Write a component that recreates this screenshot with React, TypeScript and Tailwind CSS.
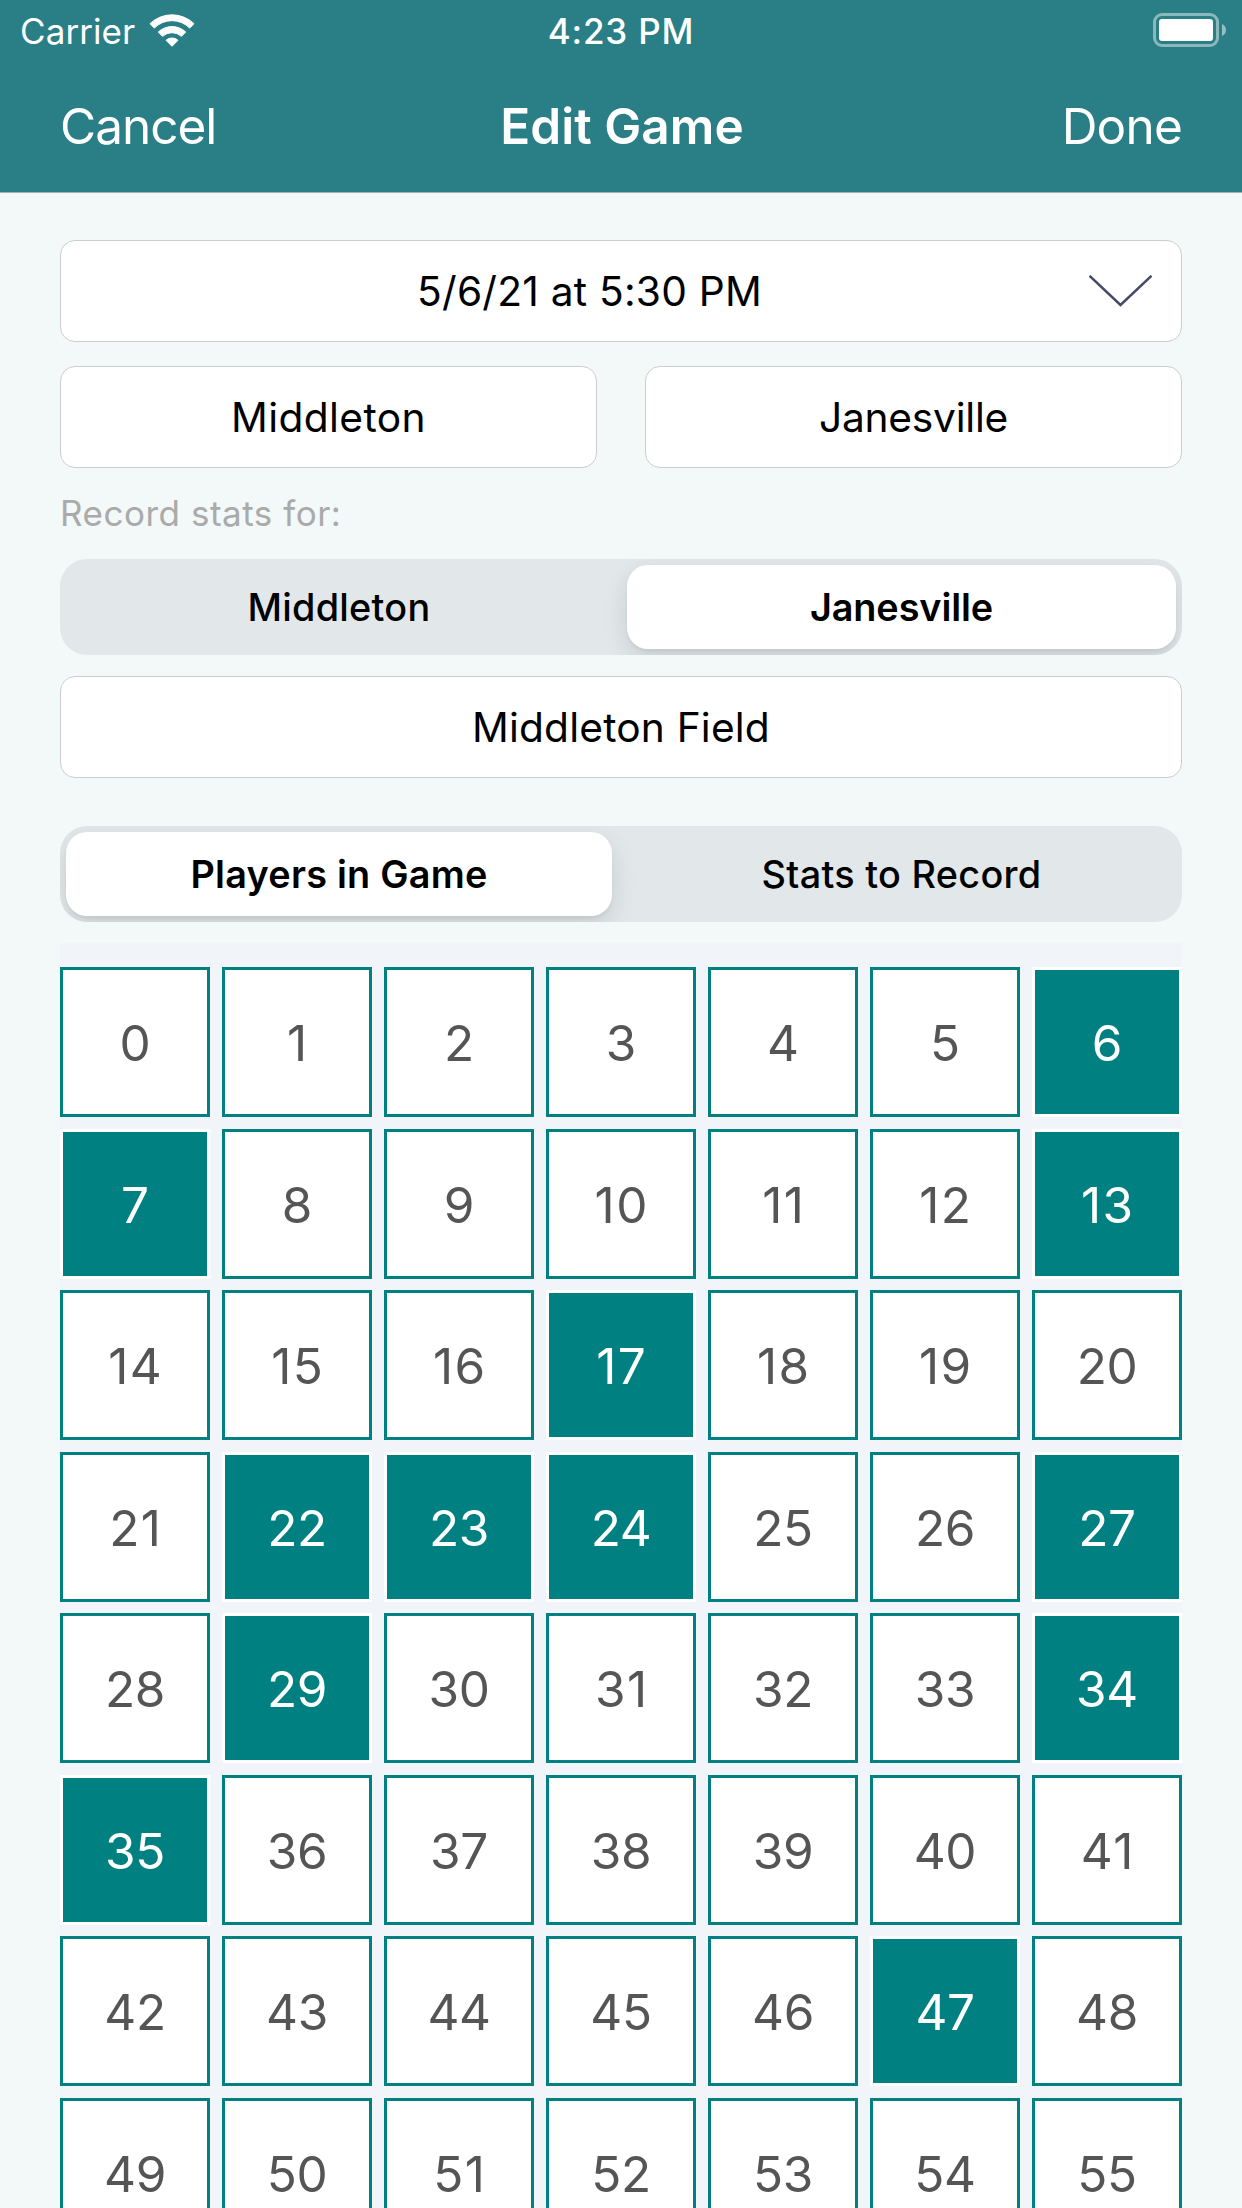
import type { ReactNode } from 'react';
import clsx from 'clsx';

const selected = new Set([6, 7, 13, 17, 22, 23, 24, 27, 29, 34, 35, 47]);
const players = Array.from({ length: 56 }, (_, n) => n);

function WifiIcon() {
  return (
    <svg width="47" height="35" viewBox="0 0 47 35" fill="#fff" stroke="#fff" strokeWidth="1" strokeLinejoin="round">
      <path d="M0.9 10.7 A32 32 0 0 1 45.1 10.7 L40.7 15 A25 25 0 0 0 5.3 15 Z" />
      <path d="M9.2 19.1 A20 20 0 0 1 36.8 19.1 L32.4 23.3 A14 14 0 0 0 13.6 23.3 Z" />
      <path d="M17 27.3 A9 9 0 0 1 29 27.3 L23 33.3 Z" />
    </svg>
  );
}

function BatteryIcon() {
  return (
    <div className="flex items-center gap-[3px]">
      <div className="h-[34px] w-[66px] rounded-[9px] border-[3px] border-white/45 p-[3px]">
        <div className="h-full rounded-[3px] bg-white" />
      </div>
      <svg width="4" height="12" viewBox="0 0 4 12">
        <path d="M0 0 C2.4 1 4 3.2 4 6 S2.4 11 0 12 Z" fill="#fff" fillOpacity="0.5" />
      </svg>
    </div>
  );
}

function StatusBar() {
  return (
    <div className="grid h-[60px] grid-cols-3 items-center text-[35px] leading-[42px]">
      <div className="flex items-center pl-[20px]">
        <span className="pt-[2px] tracking-[0.08px]">Carrier</span>
        <span className="ml-[14px]">
          <WifiIcon />
        </span>
      </div>
      <span className="pt-[2px] text-center font-medium tracking-[0.8px]">4:23 PM</span>
      <div className="flex justify-end pr-[16px]">
        <BatteryIcon />
      </div>
    </div>
  );
}

function NavBar() {
  return (
    <div className="grid h-[132px] grid-cols-3 items-center px-[60px] text-[49.5px] leading-[60px]">
      <span className="tracking-[-1px]">Cancel</span>
      <span className="pl-[2px] text-center font-semibold whitespace-nowrap tracking-[0.05px]">Edit Game</span>
      <span className="text-right tracking-[-0.8px]">Done</span>
    </div>
  );
}

function Field({ children, className }: { children: ReactNode; className?: string }) {
  return (
    <div
      className={clsx(
        'flex h-[102px] items-center rounded-[15px] border border-[#cdcdcd] bg-white text-[40.7px] leading-[50px] text-black',
        className,
      )}
    >
      {children}
    </div>
  );
}

function Segmented({ left, right, active, className }: { left: string; right: string; active: 'left' | 'right'; className?: string }) {
  const on = 'rounded-[21px] bg-white font-semibold shadow-[0_9px_24px_rgba(0,0,0,0.12),0_3px_3px_rgba(0,0,0,0.04)]';
  const off = 'font-medium';
  return (
    <div
      className={clsx(
        'grid h-[96px] grid-cols-[546px_549px] gap-[15px] overflow-hidden rounded-[27px] bg-[#e2e8ea] p-[6px] text-[37.8px] leading-[46px] text-black',
        className,
      )}
    >
      <div className={clsx('flex items-center justify-center tracking-[0.25px]', active === 'left' ? on : off)}>{left}</div>
      <div className={clsx('flex items-center justify-center', active === 'right' ? 'tracking-[-0.09px]' : 'tracking-[0.3px]', active === 'right' ? on : off)}>
        {right}
      </div>
    </div>
  );
}

// Pairs that contain the narrow "1" are set looser than the others.
function digitTracking(n: number) {
  if (n < 10) return '';
  return String(n).includes('1') ? 'pl-[1.4px] tracking-[1.4px]' : 'tracking-[-0.4px]';
}

export default function App() {
  return (
    <div className="h-[2208px] w-[1242px] overflow-hidden bg-[#f3f9f8] font-[Inter,sans-serif]">
      <header className="h-[193px] border-b border-[#a9adae] bg-[#2a7e85] text-white">
        <StatusBar />
        <NavBar />
      </header>

      <main className="flex flex-col px-[60px] pt-[47px]">
        <Field>
          <span className="flex-1 pt-[2px] pl-[29px] text-center tracking-[0.22px]">5/6/21 at 5:30 PM</span>
          <svg className="mr-[29px]" width="63" height="32" viewBox="0 0 63 32" fill="none" stroke="#454a68" strokeWidth="2.5">
            <path d="M0.5 0.8 L31.5 30 L62.5 0.8" />
          </svg>
        </Field>

        <div className="mt-[24px] grid grid-cols-2 gap-[48px]">
          <Field className="justify-center pt-[2px] tracking-[0.4px]">Middleton</Field>
          <Field className="justify-center pt-[2px] tracking-[-0.23px]">Janesville</Field>
        </div>

        <div className="mt-[24px] h-[42px] text-[35px] leading-[42px] tracking-[0.52px] text-[#aaaaaa]">Record stats for:</div>

        <Segmented className="mt-[25px]" left="Middleton" right="Janesville" active="right" />

        <Field className="mt-[21px] justify-center pt-[2px] tracking-[0.18px]">Middleton Field</Field>

        <Segmented className="mt-[48px]" left="Players in Game" right="Stats to Record" active="left" />

        <div className="mt-[21px] grid auto-rows-[162px_161px] grid-cols-7 gap-x-[12px] bg-[#f1f5f9] pt-[24px]">
          {players.map((n) => (
            <div
              key={n}
              className={clsx(
                'flex h-[150px] items-center justify-center border-[3px] pt-[2px] text-[49.5px] leading-[60px]',
                digitTracking(n),
                selected.has(n) ? 'border-white bg-[#008080] text-white' : 'border-[#008080] bg-white text-[#555555]',
              )}
            >
              {n}
            </div>
          ))}
        </div>
      </main>
    </div>
  );
}
